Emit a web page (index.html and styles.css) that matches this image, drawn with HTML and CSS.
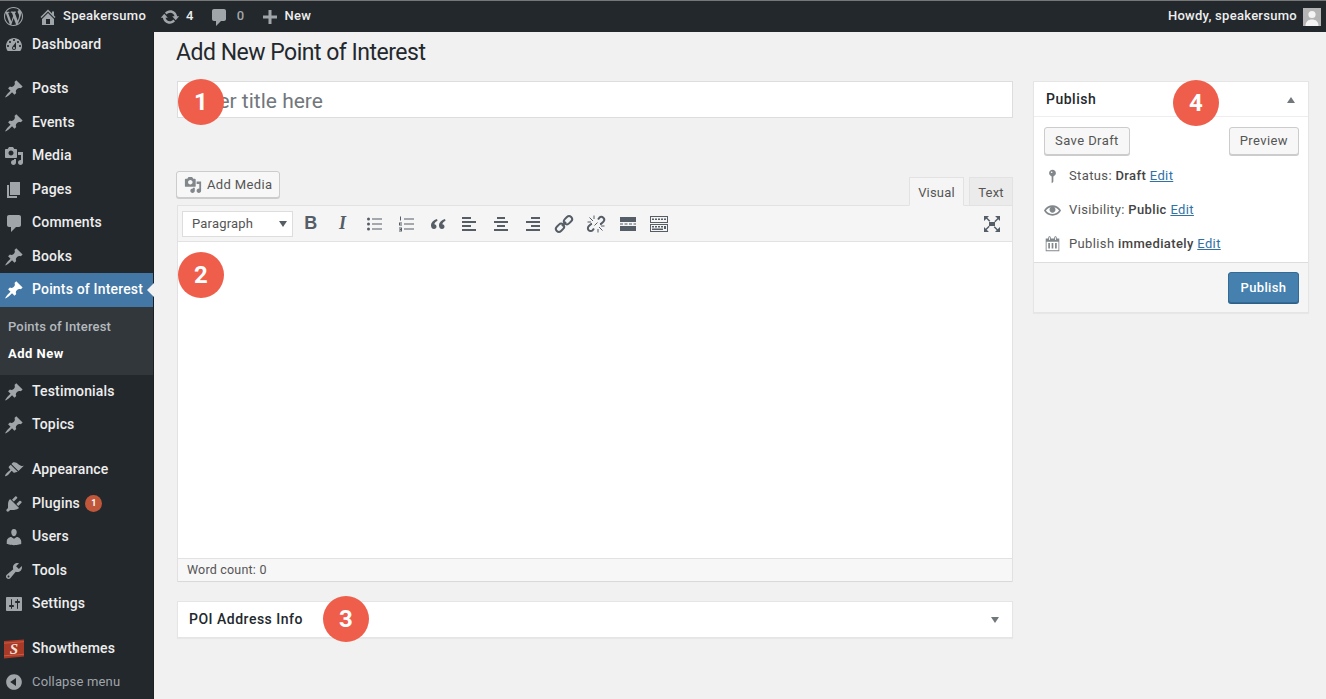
FILE: index.html
```html
<!DOCTYPE html>
<html lang="en">
<head>
<meta charset="utf-8">
<title>Add New Point of Interest</title>
<link rel="stylesheet" href="styles.css">
</head>
<body>
<svg class="sprite" aria-hidden="true">
  <symbol id="i-wp" viewBox="0 0 20 20"><path d="M20 10c0-5.51-4.49-10-10-10C4.48 0 0 4.49 0 10c0 5.52 4.48 10 10 10 5.51 0 10-4.48 10-10zM7.78 15.37L4.37 6.22c.55-.02 1.17-.08 1.17-.08.5-.06.44-1.13-.06-1.11 0 0-1.45.11-2.37.11-.18 0-.37 0-.58-.01C4.12 2.69 6.87 1.11 10 1.11c2.33 0 4.45.87 6.05 2.34-.68-.11-1.65.39-1.65 1.58 0 .74.45 1.36.9 2.1.35.61.55 1.36.55 2.46 0 1.49-1.4 5-1.4 5l-3.03-8.37c.54-.02.82-.17.82-.17.5-.05.44-1.25-.06-1.22 0 0-1.44.12-2.38.12-.87 0-2.33-.12-2.33-.12-.5-.03-.56 1.2-.06 1.22l.92.08 1.26 3.41zM17.41 10c.24-.64.74-1.87.43-4.25.7 1.29 1.05 2.71 1.05 4.25 0 3.29-1.73 6.24-4.4 7.78.97-2.59 1.94-5.2 2.92-7.78zM6.1 18.09C3.12 16.65 1.11 13.53 1.11 10c0-1.3.23-2.48.72-3.59C3.25 10.3 4.67 14.2 6.1 18.09zm4.03-6.63l2.58 6.98c-.86.29-1.76.45-2.71.45-.79 0-1.57-.11-2.29-.33.81-2.38 1.62-4.74 2.42-7.1z"/></symbol>
  <symbol id="i-home" viewBox="0 0 20 20"><path d="M16 8.5l1.53 1.53-1.06 1.06L10 4.62l-6.47 6.47-1.06-1.06L10 2.5l4 4v-2h2v4zm-6-2.46l6 5.99V18H4v-5.97zM12 17v-5H8v5h4z"/></symbol>
  <symbol id="i-update" viewBox="0 0 20 20"><path d="M10.2 3.28c3.53 0 6.43 2.61 6.92 6h2.08l-3.5 4-3.5-4h2.32c-.45-1.97-2.21-3.45-4.32-3.45-1.45 0-2.73.71-3.54 1.78L4.95 5.66C6.23 4.2 8.11 3.28 10.2 3.28zm-.4 13.44c-3.52 0-6.43-2.61-6.92-6H.8l3.5-4c1.17 1.33 2.33 2.67 3.5 4H5.48c.45 1.97 2.21 3.45 4.32 3.45 1.45 0 2.73-.71 3.54-1.78l1.71 1.95c-1.28 1.46-3.15 2.38-5.25 2.38z"/></symbol>
  <symbol id="i-comment" viewBox="0 0 20 20"><path d="M5 2h10c1.1 0 2 .9 2 2v8c0 1.1-.9 2-2 2h-3l-5 5v-5H5c-1.1 0-2-.9-2-2V4c0-1.1.9-2 2-2z"/></symbol>
  <symbol id="i-plus" viewBox="0 0 20 20"><path d="M17 8.5v3h-5.5V17h-3v-5.5H3v-3h5.5V3h3v5.5z"/></symbol>
  <symbol id="i-dash" viewBox="0 0 20 20"><path d="M3.76 16h12.48c1.1-1.37 1.76-3.11 1.76-5 0-4.42-3.58-8-8-8s-8 3.58-8 8c0 1.89.66 3.63 1.76 5zM10 4c.55 0 1 .45 1 1s-.45 1-1 1-1-.45-1-1 .45-1 1-1zM6 6c.55 0 1 .45 1 1s-.45 1-1 1-1-.45-1-1 .45-1 1-1zm8 0c.55 0 1 .45 1 1s-.45 1-1 1-1-.45-1-1 .45-1 1-1zm-5.37 5.55L12 7v6c0 1.1-.9 2-2 2s-2-.9-2-2c0-.57.24-1.08.63-1.45zM4 10c.55 0 1 .45 1 1s-.45 1-1 1-1-.45-1-1 .45-1 1-1zm12 0c.55 0 1 .45 1 1s-.45 1-1 1-1-.45-1-1 .45-1 1-1zm-5 3c0-.55-.45-1-1-1s-1 .45-1 1 .45 1 1 1 1-.45 1-1z"/></symbol>
  <symbol id="i-pin" viewBox="0 0 20 20"><path d="M10.44 3.02l1.82-1.82 6.36 6.35-1.83 1.82c-1.05-.68-2.48-.57-3.41.36l-.75.75c-.92.93-1.04 2.35-.35 3.41l-1.83 1.82-2.41-2.41-2.8 2.79c-.42.42-3.38 2.71-3.8 2.29s1.86-3.39 2.28-3.81l2.79-2.79L4.1 9.36l1.83-1.82c1.05.69 2.48.57 3.4-.36l.75-.75c.93-.92 1.05-2.35.36-3.41z"/></symbol>
  <symbol id="i-media" viewBox="0 0 20 20"><path d="M13 11V4c0-.55-.45-1-1-1h-1.67L9 1H5L3.67 3H2c-.55 0-1 .45-1 1v7c0 .55.45 1 1 1h10c.55 0 1-.45 1-1zM7 4.5c1.38 0 2.5 1.12 2.5 2.5S8.38 9.5 7 9.5 4.5 8.38 4.5 7 5.62 4.5 7 4.5zM14 6h5v10.5c0 1.38-1.12 2.5-2.5 2.5S14 17.88 14 16.5s1.12-2.5 2.5-2.5c.17 0 .34.02.5.05V9h-3V6zm-4 8.05V13h2v3.5c0 1.38-1.12 2.5-2.5 2.5S7 17.88 7 16.5 8.12 14 9.5 14c.17 0 .34.02.5.05z"/></symbol>
  <symbol id="i-page" viewBox="0 0 20 20"><path d="M6 15V2h10v13H6zm-1 1h8v2H3V5h2v11z"/></symbol>
  <symbol id="i-appearance" viewBox="0 0 20 20"><path d="M14.48 11.06L7.41 3.99l1.5-1.5c.5-.56 2.3-.47 3.51.32 1.21.8 1.43 1.28 2.91 2.1 1.18.64 2.45 1.26 4.45.85zm-.71.71L6.7 4.7 4.93 6.47c-.39.39-.39 1.02 0 1.41l1.06 1.06c.39.39.39 1.03 0 1.42-.6.6-1.43 1.11-2.21 1.69-.35.26-.7.53-1.01.84-1.34 1.35-2.01 3-1.64 3.37.36.37 2.02-.3 3.37-1.64.31-.31.58-.66.84-1.01.58-.78 1.09-1.61 1.69-2.21.39-.39 1.03-.39 1.42 0l1.06 1.06c.39.39 1.02.39 1.41 0z"/></symbol>
  <symbol id="i-plugin" viewBox="0 0 20 20"><path d="M13.11 4.36L9.87 7.6 8 5.73l3.24-3.24c.35-.34 1.05-.2 1.56.32.52.51.66 1.21.31 1.55zm-8 1.77l.91-1.12 9.01 9.01-1.19.84c-.71.71-2.63 1.16-3.82 1.16H6.14L4.9 17.26c-.59.59-1.54.59-2.12 0-.59-.58-.59-1.53 0-2.12l1.24-1.24v-3.88c0-1.13.4-3.19 1.09-3.89zm7.26 3.97l3.24-3.24c.34-.35 1.04-.21 1.55.31.52.51.66 1.21.31 1.55l-3.24 3.25z"/></symbol>
  <symbol id="i-users" viewBox="0 0 20 20"><path d="M10 9.25c-2.27 0-2.73-3.44-2.73-3.44C7 4.02 7.82 2 9.97 2c2.16 0 2.98 2.02 2.71 3.81 0 0-.41 3.44-2.68 3.44zm0 2.57L12.72 10c2.39 0 4.52 2.33 4.52 4.53v2.49s-3.65 1.13-7.24 1.13c-3.65 0-7.24-1.13-7.24-1.13v-2.49c0-2.25 1.94-4.48 4.47-4.48z"/></symbol>
  <symbol id="i-tools" viewBox="0 0 20 20"><path d="M16.68 9.77c-1.34 1.34-3.3 1.67-4.95.99l-5.41 6.52c-.99.99-2.59.99-3.58 0s-.99-2.59 0-3.57l6.52-5.42c-.68-1.65-.35-3.61.99-4.95 1.28-1.28 3.12-1.62 4.72-1.06l-2.89 2.89 2.82 2.82 2.86-2.87c.53 1.58.18 3.39-1.08 4.65zM3.81 16.21c.4.39 1.04.39 1.43 0 .4-.4.4-1.04 0-1.43-.39-.4-1.03-.4-1.43 0-.39.39-.39 1.03 0 1.43z"/></symbol>
  <symbol id="i-settings" viewBox="0 0 20 20"><path d="M18 16V4c0-.55-.45-1-1-1H3c-.55 0-1 .45-1 1v12c0 .55.45 1 1 1h14c.55 0 1-.45 1-1zM8 11h1c.55 0 1 .45 1 1s-.45 1-1 1H8v1.5c0 .28-.22.5-.5.5s-.5-.22-.5-.5V13H6c-.55 0-1-.45-1-1s.45-1 1-1h1V5.5c0-.28.22-.5.5-.5s.5.22.5.5V11zm5-2h-1c-.55 0-1-.45-1-1s.45-1 1-1h1V5.5c0-.28.22-.5.5-.5s.5.22.5.5V7h1c.55 0 1 .45 1 1s-.45 1-1 1h-1v5.5c0 .28-.22.5-.5.5s-.5-.22-.5-.5V9z"/></symbol>
  <symbol id="i-collapse" viewBox="0 0 20 20"><path d="M10 2.16c4.33 0 7.84 3.51 7.84 7.84s-3.51 7.84-7.84 7.84S2.16 14.33 2.16 10 5.71 2.16 10 2.16zm2 11.72V6.12L6.18 9.97z"/></symbol>
  <symbol id="i-status" viewBox="0 0 20 20"><path d="M14 6c0 1.86-1.28 3.41-3 3.86V16c0 1-2 2-2 2V9.86c-1.72-.45-3-2-3-3.86 0-2.21 1.79-4 4-4s4 1.79 4 4zM8 5c0 .55.45 1 1 1s1-.45 1-1-.45-1-1-1-1 .45-1 1z"/></symbol>
  <symbol id="i-eye" viewBox="0 0 20 20"><path d="M19.7 9.4C17.7 6 14 3.9 10 3.9S2.3 6 .3 9.4L0 10l.3.6c2 3.4 5.7 5.5 9.7 5.5s7.7-2.1 9.7-5.5l.3-.6-.3-.6zM10 14.1c-3.1 0-6-1.6-7.7-4.1C3.6 8 5.7 6.6 8 6.1c-.9.6-1.5 1.7-1.5 2.9 0 1.9 1.6 3.5 3.5 3.5s3.5-1.6 3.5-3.5c0-1.2-.6-2.3-1.5-2.9 2.3.5 4.4 1.9 5.7 3.9-1.7 2.5-4.6 4.1-7.7 4.1z"/></symbol>
  <symbol id="i-cal" viewBox="0 0 20 20"><path d="M15 4h3v15H2V4h3V3c0-.41.15-.76.44-1.06.29-.29.65-.44 1.06-.44s.77.15 1.06.44c.29.3.44.65.44 1.06v1h4V3c0-.41.15-.76.44-1.06.29-.29.65-.44 1.06-.44s.77.15 1.06.44c.29.3.44.65.44 1.06v1zM6 3v2.5c0 .14.05.26.15.36.09.09.21.14.35.14s.26-.05.35-.14c.1-.1.15-.22.15-.36V3c0-.14-.05-.26-.15-.35-.09-.1-.21-.15-.35-.15s-.26.05-.35.15c-.1.09-.15.21-.15.35zm7 0v2.5c0 .14.05.26.14.36.1.09.22.14.36.14s.26-.05.36-.14c.09-.1.14-.22.14-.36V3c0-.14-.05-.26-.14-.35-.1-.1-.22-.15-.36-.15s-.26.05-.36.15c-.09.09-.14.21-.14.35zm4 15V8H3v10h14zM5 9.500h2V16H5zm4 0h2V16H9zm4 0h2V16h-2z"/></symbol>
</svg>

<header class="adminbar">
  <svg class="ab-logo"><use href="#i-wp"/></svg>
  <div class="ab-item ab-site"><svg class="ab-icon"><use href="#i-home"/></svg><span>Speakersumo</span></div>
  <div class="ab-item ab-updates"><svg class="ab-icon"><use href="#i-update"/></svg><span>4</span></div>
  <div class="ab-item ab-comments"><svg class="ab-icon"><use href="#i-comment"/></svg><span class="ab-dim">0</span></div>
  <div class="ab-item ab-new"><svg class="ab-icon"><use href="#i-plus"/></svg><span>New</span></div>
  <div class="ab-account"><span>Howdy, speakersumo</span><div class="avatar"><svg viewBox="0 0 18 18"><circle cx="9" cy="6.500" r="3.600"/><path d="M2.500 18c0-4.500 3-6.500 6.500-6.500s6.500 2 6.500 6.500z"/></svg></div></div>
</header>

<div class="layout">
  <nav class="sidebar">
    <a class="menu-item first sep"><svg class="m-icon"><use href="#i-dash"/></svg><span>Dashboard</span></a>
    <a class="menu-item"><svg class="m-icon"><use href="#i-pin"/></svg><span>Posts</span></a>
    <a class="menu-item"><svg class="m-icon"><use href="#i-pin"/></svg><span>Events</span></a>
    <a class="menu-item"><svg class="m-icon"><use href="#i-media"/></svg><span>Media</span></a>
    <a class="menu-item"><svg class="m-icon"><use href="#i-page"/></svg><span>Pages</span></a>
    <a class="menu-item"><svg class="m-icon"><use href="#i-comment"/></svg><span>Comments</span></a>
    <a class="menu-item"><svg class="m-icon"><use href="#i-pin"/></svg><span>Books</span></a>
    <a class="menu-item active"><svg class="m-icon"><use href="#i-pin"/></svg><span>Points of Interest</span></a>
    <div class="submenu">
      <a class="sub-item">Points of Interest</a>
      <a class="sub-item current">Add New</a>
    </div>
    <a class="menu-item"><svg class="m-icon"><use href="#i-pin"/></svg><span>Testimonials</span></a>
    <a class="menu-item sep2"><svg class="m-icon"><use href="#i-pin"/></svg><span>Topics</span></a>
    <a class="menu-item"><svg class="m-icon"><use href="#i-appearance"/></svg><span>Appearance</span></a>
    <a class="menu-item"><svg class="m-icon"><use href="#i-plugin"/></svg><span>Plugins</span><b class="badge">1</b></a>
    <a class="menu-item"><svg class="m-icon"><use href="#i-users"/></svg><span>Users</span></a>
    <a class="menu-item"><svg class="m-icon"><use href="#i-tools"/></svg><span>Tools</span></a>
    <a class="menu-item sep3"><svg class="m-icon"><use href="#i-settings"/></svg><span>Settings</span></a>
    <a class="menu-item"><svg class="m-logo" viewBox="0 0 22 22"><path class="logo-red" d="M1 3l20-1.500v17l-20 2z"/><path class="logo-line" d="M1 5.200l20-1.500M1 17.800l20-1.500"/><text class="logo-s" x="11" y="15.800" text-anchor="middle">S</text></svg><span>Showthemes</span></a>
    <a class="menu-item collapse"><svg class="m-icon"><use href="#i-collapse"/></svg><span>Collapse menu</span></a>
  </nav>

  <main class="content">
    <h1 class="page-title">Add New Point of Interest</h1>
    <div class="columns">
      <div class="col-main">
        <div class="title-box">
          <div class="title-input">Enter title here</div>
          <div class="marker marker-1">1</div>
        </div>
        <div class="editor-head">
          <button class="btn btn-media"><svg class="btn-icon"><use href="#i-media"/></svg>Add Media</button>
          <div class="tabs"><span class="tab on">Visual</span><span class="tab">Text</span></div>
        </div>
        <div class="editor">
          <div class="toolbar">
            <div class="format"><span>Paragraph</span><i class="caret"></i></div>
            <span class="tool tool-b">B</span>
            <span class="tool tool-i">I</span>
            <span class="tool"><svg viewBox="0 0 20 20"><circle cx="4.500" cy="5" r="1.500"/><circle cx="4.500" cy="10" r="1.500"/><circle cx="4.500" cy="15" r="1.500"/><path d="M8 4.500h10v1H8zM8 9.500h10v1H8zM8 14.500h10v1H8z"/></svg></span>
            <span class="tool"><svg viewBox="0 0 20 20"><path d="M4 2.500h1v4H4zM3 8.500h3v1H4v1h2v1H3zM3 13.500h3v4H3v-1h2v-.5H3.500v-1H5v-.5H3z"/><path d="M8 4.500h10v1H8zM8 9.500h10v1H8zM8 14.500h10v1H8z"/></svg></span>
            <span class="tool"><svg viewBox="0 0 20 20"><path d="M9 5C5.500 6 3 8.500 3 11.500 3 14 4.500 15 6 15c1.600 0 2.500-1.100 2.500-2.400S7.600 10.200 6.300 10.200c.3-1.500 1.400-2.700 3.200-3.500zM17 5c-3.500 1-6 3.500-6 6.500 0 2.500 1.500 3.500 3 3.500 1.600 0 2.500-1.100 2.500-2.400s-.9-2.400-2.200-2.400c.3-1.500 1.400-2.700 3.200-3.500z"/></svg></span>
            <span class="tool"><svg viewBox="0 0 20 20"><path d="M3 3h9v2H3zM3 7h14v2H3zM3 11h9v2H3zM3 15h14v2H3z"/></svg></span>
            <span class="tool"><svg viewBox="0 0 20 20"><path d="M6 3h8v2H6zM3 7h14v2H3zM6 11h8v2H6zM3 15h14v2H3z"/></svg></span>
            <span class="tool"><svg viewBox="0 0 20 20"><path d="M8 3h9v2H8zM3 7h14v2H3zM8 11h9v2H8zM3 15h14v2H3z"/></svg></span>
            <span class="tool"><svg viewBox="0 0 20 20"><rect class="stroke" x="9.500" y="1.800" width="9" height="6" rx="3" transform="rotate(-45 14 4.800) translate(-1 1)"/><rect class="stroke" x="1.500" y="12.200" width="9" height="6" rx="3" transform="rotate(-45 6 15.200) translate(1 -1)"/><path class="stroke" d="M8 12l4-4"/></svg></span>
            <span class="tool"><svg viewBox="0 0 20 20"><path class="stroke" d="M12 5.500l1.300-1.700a2.800 2.800 0 0 1 4 4L15.500 9.500a2.800 2.800 0 0 1-1.500.8M8 14.500l-1.300 1.700a2.800 2.800 0 0 1-4-4L4.500 10.500a2.800 2.800 0 0 1 1.500-.8"/><path class="thin" d="M3.500 3.500l3.500 3.500M8 1.500v3.500M1.500 8H5M16.500 16.500L13 13M12 18.500V15M18.500 12H15M11.500 8.500l-3 3"/></svg></span>
            <span class="tool"><svg viewBox="0 0 20 20"><path d="M2 3h16v5H2zM2 12h16v5H2zM2 9.500h3v1H2zM6.500 9.500h3v1h-3zM11 9.500h3v1h-3zM15.500 9.500H18v1h-2.500z"/></svg></span>
            <span class="tool"><svg viewBox="0 0 20 20"><path d="M1 2h18v7H1zm1 1v5h16V3zM3 4.500h2v1.500H3zM6 4.500h2v1.500H6zM9 4.500h2v1.500H9zM12 4.500h2v1.500h-2zM15 4.500h2v1.500h-2zM1 10h18v8H1zm1 1v6h16v-6zM3 12h2v1.500H3zM6 12h2v1.500H6zM9 12h2v1.500H9zM12 12h2v1.500h-2zM15 12h2v3h-2zM3 14.500h11V16H3z" fill-rule="evenodd"/></svg></span>
            <span class="tool tool-full"><svg viewBox="0 0 20 20"><path d="M7 8h6v4H7zM2 2h5L5.300 3.700l3 3-1 1-3-3L2.600 6.400 2 7zM18 2v5l-1.700-1.700-3 3-1-1 3-3L13.600 2.600 13 2zM2 18v-5l1.700 1.700 3-3 1 1-3 3 1.700 1.700.6.600zM18 18h-5l1.700-1.700-3-3 1-1 3 3 1.700-1.700.6-.6z"/></svg></span>
          </div>
          <div class="editor-body"><div class="marker marker-2">2</div></div>
          <div class="editor-status">Word count: 0</div>
        </div>
        <section class="postbox poi">
          <h2>POI Address Info</h2>
          <i class="caret caret-poi"></i>
          <div class="marker marker-3">3</div>
        </section>
      </div>

      <aside class="publish">
        <div class="publish-head">
          <h2>Publish</h2>
          <i class="caret-up"></i>
          <div class="marker marker-4">4</div>
        </div>
        <div class="publish-actions">
          <button class="btn">Save Draft</button>
          <button class="btn">Preview</button>
        </div>
        <div class="pub-row"><svg class="pub-icon"><use href="#i-status"/></svg><span>Status: <b>Draft</b> <a>Edit</a></span></div>
        <div class="pub-row"><svg class="pub-icon"><use href="#i-eye"/></svg><span>Visibility: <b>Public</b> <a>Edit</a></span></div>
        <div class="pub-row"><svg class="pub-icon"><use href="#i-cal"/></svg><span>Publish <b>immediately</b> <a>Edit</a></span></div>
        <div class="publish-foot"><button class="btn btn-primary">Publish</button></div>
      </aside>
    </div>
  </main>
</div>
</body>
</html>
```

FILE: styles.css
```css
* { box-sizing: border-box; }
html, body { margin: 0; height: 100%; }
body {
  width: 1326px;
  height: 699px;
  overflow: hidden;
  background: #f1f1f1;
  color: #32373c;
  font: 13px/1.4 Roboto, "Liberation Sans", sans-serif;
}
.sprite { display: none; }
svg { fill: currentColor; display: block; }
h1, h2 { margin: 0; }

/* admin bar */
.adminbar {
  height: 32px;
  background: #23282d;
  border-top: 1px solid #777;
  display: flex;
  align-items: center;
  padding-left: 4px;
  color: #eee;
  font-weight: 500;
  font-size: 13px;
  letter-spacing: .28px;
}
.ab-logo { width: 19px; height: 19px; color: #a0a5aa; margin-right: 15px; }
.ab-icon { width: 20px; height: 20px; color: #a0a5aa; flex: none; }
.ab-item { display: flex; align-items: center; gap: 5px; }
.ab-site { margin-right: 14px; }
.ab-updates { margin-right: 15px; gap: 6px; }
.ab-comments { margin-right: 16px; gap: 8px; }
.ab-dim { color: #a0a5aa; }
.ab-new { gap: 4px; }
.ab-account { margin-left: auto; display: flex; align-items: center; gap: 6px; padding-right: 5px; }
.avatar { width: 18px; height: 18px; background: #b5b5b5; color: #f4f4f4; }

.layout { display: flex; height: 667px; }

/* sidebar */
.sidebar {
  width: 154px;
  flex: none;
  background: #23282d;
  color: #eee;
  font-size: 14px;
  font-weight: 500;
  letter-spacing: .17px;
  border-right: 1px solid #1c2024;
  padding-top: 1px;
}
.menu-item {
  height: 33.5px;
  display: flex;
  align-items: center;
  gap: 8px;
  padding-left: 4px;
  position: relative;
}
.menu-item.first { height: 24px; }
.sep { margin-bottom: 15.25px; }
.sep2 { margin-bottom: 11.5px; }
.sep3 { margin-bottom: 11px; }
.m-icon { width: 20px; height: 20px; color: #a0a5aa; flex: none; }
.m-logo { width: 22px; height: 22px; margin: 0 -1px 0 -1px; flex: none; }
.logo-red { fill: #a93a28; }
.logo-line { fill: none; stroke: #d9694f; stroke-width: .7; }
.logo-s { fill: #f3e3d8; font: italic 700 15px "Liberation Serif", serif; }
.active { background: #4277a6; color: #fff; }
.active .m-icon { color: #fff; }
.active::after {
  content: "";
  position: absolute;
  right: -1px;
  top: 50%;
  margin-top: -7px;
  border: 7px solid transparent;
  border-left-width: 0;
  border-right-color: #f1f1f1;
}
.submenu { background: #32373c; padding: 7.5px 0 7.5px; }
.sub-item {
  display: block;
  height: 26.5px;
  line-height: 26.5px;
  padding-left: 8px;
  font-size: 13px;
  color: #b4b9be;
  letter-spacing: .15px;
}
.sub-item.current { color: #fff; font-weight: 700; letter-spacing: .5px; }
.badge {
  width: 17px;
  height: 17px;
  border-radius: 50%;
  background: #c1573a;
  color: #fff;
  font-size: 9px;
  line-height: 17px;
  text-align: center;
  font-weight: 700;
  margin-left: -2.5px;
}
.collapse { color: #a0a5aa; font-size: 13px; font-weight: 400; }

/* content */
.content { flex: 1; padding: 9px 0 0 22px; min-width: 0; }
.page-title {
  font-size: 23px;
  letter-spacing: -.5px;
  font-weight: 400;
  line-height: 24px;
  color: #23282d;
}
.columns { display: flex; gap: 20px; margin: 16px 0 0 1px; }
.col-main { width: 836px; flex: none; }
.title-box { position: relative; }
.title-input {
  height: 37px;
  background: #fff;
  border: 1px solid #ddd;
  padding-left: 10px;
  font-size: 21px;
  line-height: 38px;
  color: #72777c;
}
.marker {
  position: absolute;
  width: 46px;
  height: 46px;
  border-radius: 50%;
  background: #ef5d4b;
  color: #fff;
  font-size: 24px;
  font-weight: 700;
  line-height: 46px;
  text-align: center;
}
.marker-1 { left: 1px; top: -2px; }
.marker-2 { left: 0; top: 10px; }
.marker-3 { left: 145px; top: -6px; }
.marker-4 { left: 139px; top: -2px; }

.editor-head {
  height: 34px;
  margin-top: 53px;
  display: flex;
  justify-content: space-between;
  align-items: flex-start;
}
.btn {
  font: inherit;
  font-size: 13px;
  letter-spacing: .35px;
  height: 28px;
  padding: 1px 10px 0;
  background: #f7f7f7;
  border: 1px solid #ccc;
  border-radius: 3px;
  box-shadow: 0 1px 0 #ccc;
  color: #555;
}
.btn-media {
  display: flex;
  align-items: center;
  gap: 5px;
  margin-left: -1px;
  height: 27px;
  padding: 1px 7px 0 7px;
}
.btn-icon { width: 18px; height: 18px; color: #82878c; }
.tabs { display: flex; gap: 5px; align-self: flex-end; }
.tab {
  height: 29px;
  padding: 1px 0 0;
  line-height: 27px;
  background: #ebebeb;
  border: 1px solid #e2e2e2;
  color: #555;
  width: 44px;
  text-align: center;
  margin-bottom: -1px;
  letter-spacing: .2px;
}
.tab.on {
  width: 55px;
  background: #f5f5f5;
  border-bottom-color: #f5f5f5;
  position: relative;
}
.editor { border: 1px solid #e2e2e2; background: #fff; }
.toolbar {
  height: 36px;
  background: #f5f5f5;
  border-bottom: 1px solid #e2e2e2;
  display: flex;
  align-items: center;
  padding: 0 10px 0 4px;
  color: #555d66;
  letter-spacing: .2px;
}
.format {
  width: 111px;
  height: 26px;
  margin-right: 2px;
  background: #fff;
  border: 1px solid #ddd;
  display: flex;
  align-items: center;
  justify-content: space-between;
  padding: 1px 5px 0 9px;
  color: #555;
}
.caret {
  width: 0;
  height: 0;
  border: 4.5px solid transparent;
  border-top: 6px solid #555d66;
  border-bottom-width: 0;
}
.tool {
  width: 31.7px;
  height: 20px;
  display: flex;
  justify-content: center;
  align-items: center;
}
.tool svg { width: 20px; height: 20px; }
.tool-b { font: 700 18px "Liberation Sans", sans-serif; }
.tool-i { font: italic 700 18px "Liberation Serif", serif; }
.tool-full { margin-left: auto; width: 20px; }
.stroke { fill: none; stroke: currentColor; stroke-width: 2; }
.thin { fill: none; stroke: currentColor; stroke-width: 1; }
.editor-body { height: 316px; position: relative; background: #fff; }
.editor-status {
  height: 23px;
  background: #f7f7f7;
  border-top: 1px solid #e2e2e2;
  padding-left: 9px;
  font-size: 12.5px;
  letter-spacing: .2px;
  line-height: 22px;
  color: #555;
  box-shadow: 0 1px 1px rgba(0,0,0,.04);
}

.postbox {
  position: relative;
  margin-top: 19px;
  height: 37px;
  background: #fff;
  border: 1px solid #e5e5e5;
  box-shadow: 0 1px 1px rgba(0,0,0,.04);
  display: flex;
  align-items: center;
  justify-content: space-between;
  padding: 0 13px 0 11px;
}
.postbox h2, .publish-head h2 {
  font-size: 14px;
  font-weight: 500;
  color: #23282d;
  letter-spacing: .5px;
}
.caret-poi { border-top-color: #72777c; }

.publish {
  width: 276px;
  height: 232px;
  flex: none;
  background: #fff;
  border: 1px solid #e5e5e5;
  box-shadow: 0 1px 1px rgba(0,0,0,.04);
  display: flex;
  flex-direction: column;
}
.publish-head {
  position: relative;
  height: 35px;
  border-bottom: 1px solid #eee;
  display: flex;
  align-items: center;
  justify-content: space-between;
  padding: 1px 13px 0 12px;
  flex: none;
}
.caret-up {
  width: 0;
  height: 0;
  border: 4.5px solid transparent;
  border-bottom: 6px solid #72777c;
  border-top-width: 0;
}
.publish-actions {
  display: flex;
  justify-content: space-between;
  padding: 10px 9px 0 10px;
  height: 42.5px;
  flex: none;
}
.publish-actions .btn { padding: 1px 10px 0; letter-spacing: .42px; }
.pub-row {
  height: 33.7px;
  flex: none;
  display: flex;
  align-items: center;
  gap: 8px;
  padding-left: 10px;
  color: #555;
  letter-spacing: .37px;
}
.pub-row b { color: #444; font-weight: 500; }
.pub-row a { color: #2f72a6; text-decoration: underline; }
.pub-icon { width: 17px; height: 17px; color: #82878c; flex: none; }
.publish-foot {
  margin-top: auto;
  height: 50px;
  background: #f5f5f5;
  border-top: 1px solid #ddd;
  display: flex;
  justify-content: flex-end;
  align-items: center;
  padding-right: 9px;
}
.btn-primary {
  height: 31px;
  width: 71px;
  padding: 1px 0 0;
  background: #4580ae;
  border-color: #336b96;
  box-shadow: 0 1px 0 #2d6087;
  color: #fff;
  font-weight: 500;
}
```
